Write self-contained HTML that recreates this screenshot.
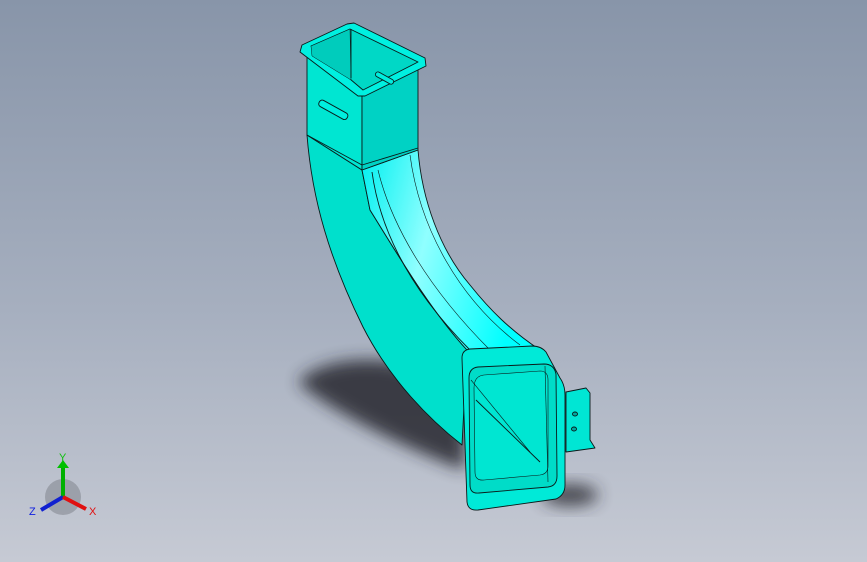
<!DOCTYPE html>
<html><head><style>
html,body{margin:0;padding:0;width:867px;height:562px;overflow:hidden}
body{background:linear-gradient(180deg,#8895a9 0%,#a6afbf 55%,#c6cad4 100%);font-family:"Liberation Sans",sans-serif}
svg{position:absolute;left:0;top:0}
</style></head><body>
<svg width="867" height="562" viewBox="0 0 867 562">
<defs>
<filter id="b" x="-50%" y="-50%" width="200%" height="200%"><feGaussianBlur stdDeviation="8"/></filter>
<linearGradient id="g2" x1="0" y1="0" x2="1" y2="0.3"><stop offset="0" stop-color="#00f0f0"/><stop offset="0.45" stop-color="#90ffff"/><stop offset="1" stop-color="#00ffff"/></linearGradient>
</defs>
<path d="M298 382 C320 358 380 352 430 372 L465 420 L465 470 C420 455 330 412 298 382Z" fill="#26282e" filter="url(#b)" opacity="0.85"/>
<ellipse cx="570" cy="495" rx="28" ry="11" fill="#2a2c33" filter="url(#b)" opacity="0.8"/>
<g stroke="#0a1a1a" stroke-width="0.9" stroke-linejoin="round">
<path d="M307 135 C312 200 330 260 363 327 C390 380 430 420 462 445 L467 350 C430 310 395 250 370 210 L362 170 Z" fill="#00e0cc"/>
<path d="M362 170 L418 150 C422 200 440 250 470 285 C490 310 510 330 540 350 L467 350 C430 310 395 250 370 210 Z" fill="url(#g2)"/>
<path d="M372 172 C380 230 410 290 470 350" fill="none"/>
<path d="M378 170 C392 228 430 290 490 350" fill="none" stroke-width="0.6"/>
<path d="M410 155 C420 230 460 300 520 345" fill="none" stroke-width="0.6"/>
<path d="M307 55 L307 135 L362 170 L362 93 Z" fill="#00e6d2"/>
<path d="M362 93 L418 63 L418 150 L362 170 Z" fill="#00d2c4"/>
<path d="M307 135 L362 165 L418 148" fill="none"/>
<path d="M302 45 L347 24 L354 23 L425 58 L426 66 L365 96 L358 96 L300 52 Z" fill="#00f0e0"/>
<path d="M311 46 L350 29 L418 62 L363 90 Z" fill="#00d8c6"/>
<path d="M311 46 L350 29 L351 80 L312 56Z" fill="#00ccbc" stroke-width="0.5"/>
<path d="M351 29 L351 78" fill="none"/>
<rect x="0" y="0" width="32" height="7" rx="3" transform="translate(321 99) rotate(29)" fill="#00eede"/>
<rect x="0" y="0" width="20" height="5" rx="2.5" transform="translate(377 71) rotate(29)" fill="#00eede"/>
<path d="M462 358 Q462 350 470 349 L532 346 Q541 346 546 352 L560 378 Q565 385 565 395 L565 485 Q565 495 556 499 L478 510 Q468 511 467 502 Z" fill="#00ead8"/>
<path d="M469 378 Q469 368 478 367 L544 364 Q554 364 556 374 L557 476 Q557 486 548 487 L479 493 Q470 494 470 485 Z" fill="#00dcc8"/>
<path d="M474 388 Q474 376 484 375 L540 371 Q548 371 548 380 L548 466 Q548 474 540 475 L484 480 Q475 481 475 472 Z" fill="#00e6d2" stroke-width="0.6"/>
<path d="M476 400 L540 462" fill="none"/>
<path d="M471 380 L530 452" fill="none" stroke-width="0.6"/>
<path d="M545 366 L548 482" fill="none" stroke-width="0.6"/>
<path d="M566 392 L586 388 L590 393 L590 440 L595 448 L566 452 Z" fill="#00e6d4"/>
<ellipse cx="575" cy="414" rx="2.5" ry="2" fill="#00a8a0"/>
<ellipse cx="574" cy="429" rx="2.5" ry="2" fill="#00a8a0"/>
</g>
<circle cx="63" cy="497" r="18" fill="#7a7d85" opacity="0.5"/>
<path d="M63 497 L63 465" stroke="#00b000" stroke-width="4"/>
<path d="M57 468 L63 460 L69 468Z" fill="#00c000"/>
<path d="M63 497 L41 510" stroke="#1020d0" stroke-width="4"/>
<path d="M63 497 L86 509" stroke="#e01010" stroke-width="4"/>
<text x="59" y="461" font-size="11" fill="#10c010">Y</text>
<text x="29" y="515" font-size="11" fill="#1020e0">Z</text>
<text x="89" y="515" font-size="11" fill="#e01010">X</text>
</svg>
</body></html>
